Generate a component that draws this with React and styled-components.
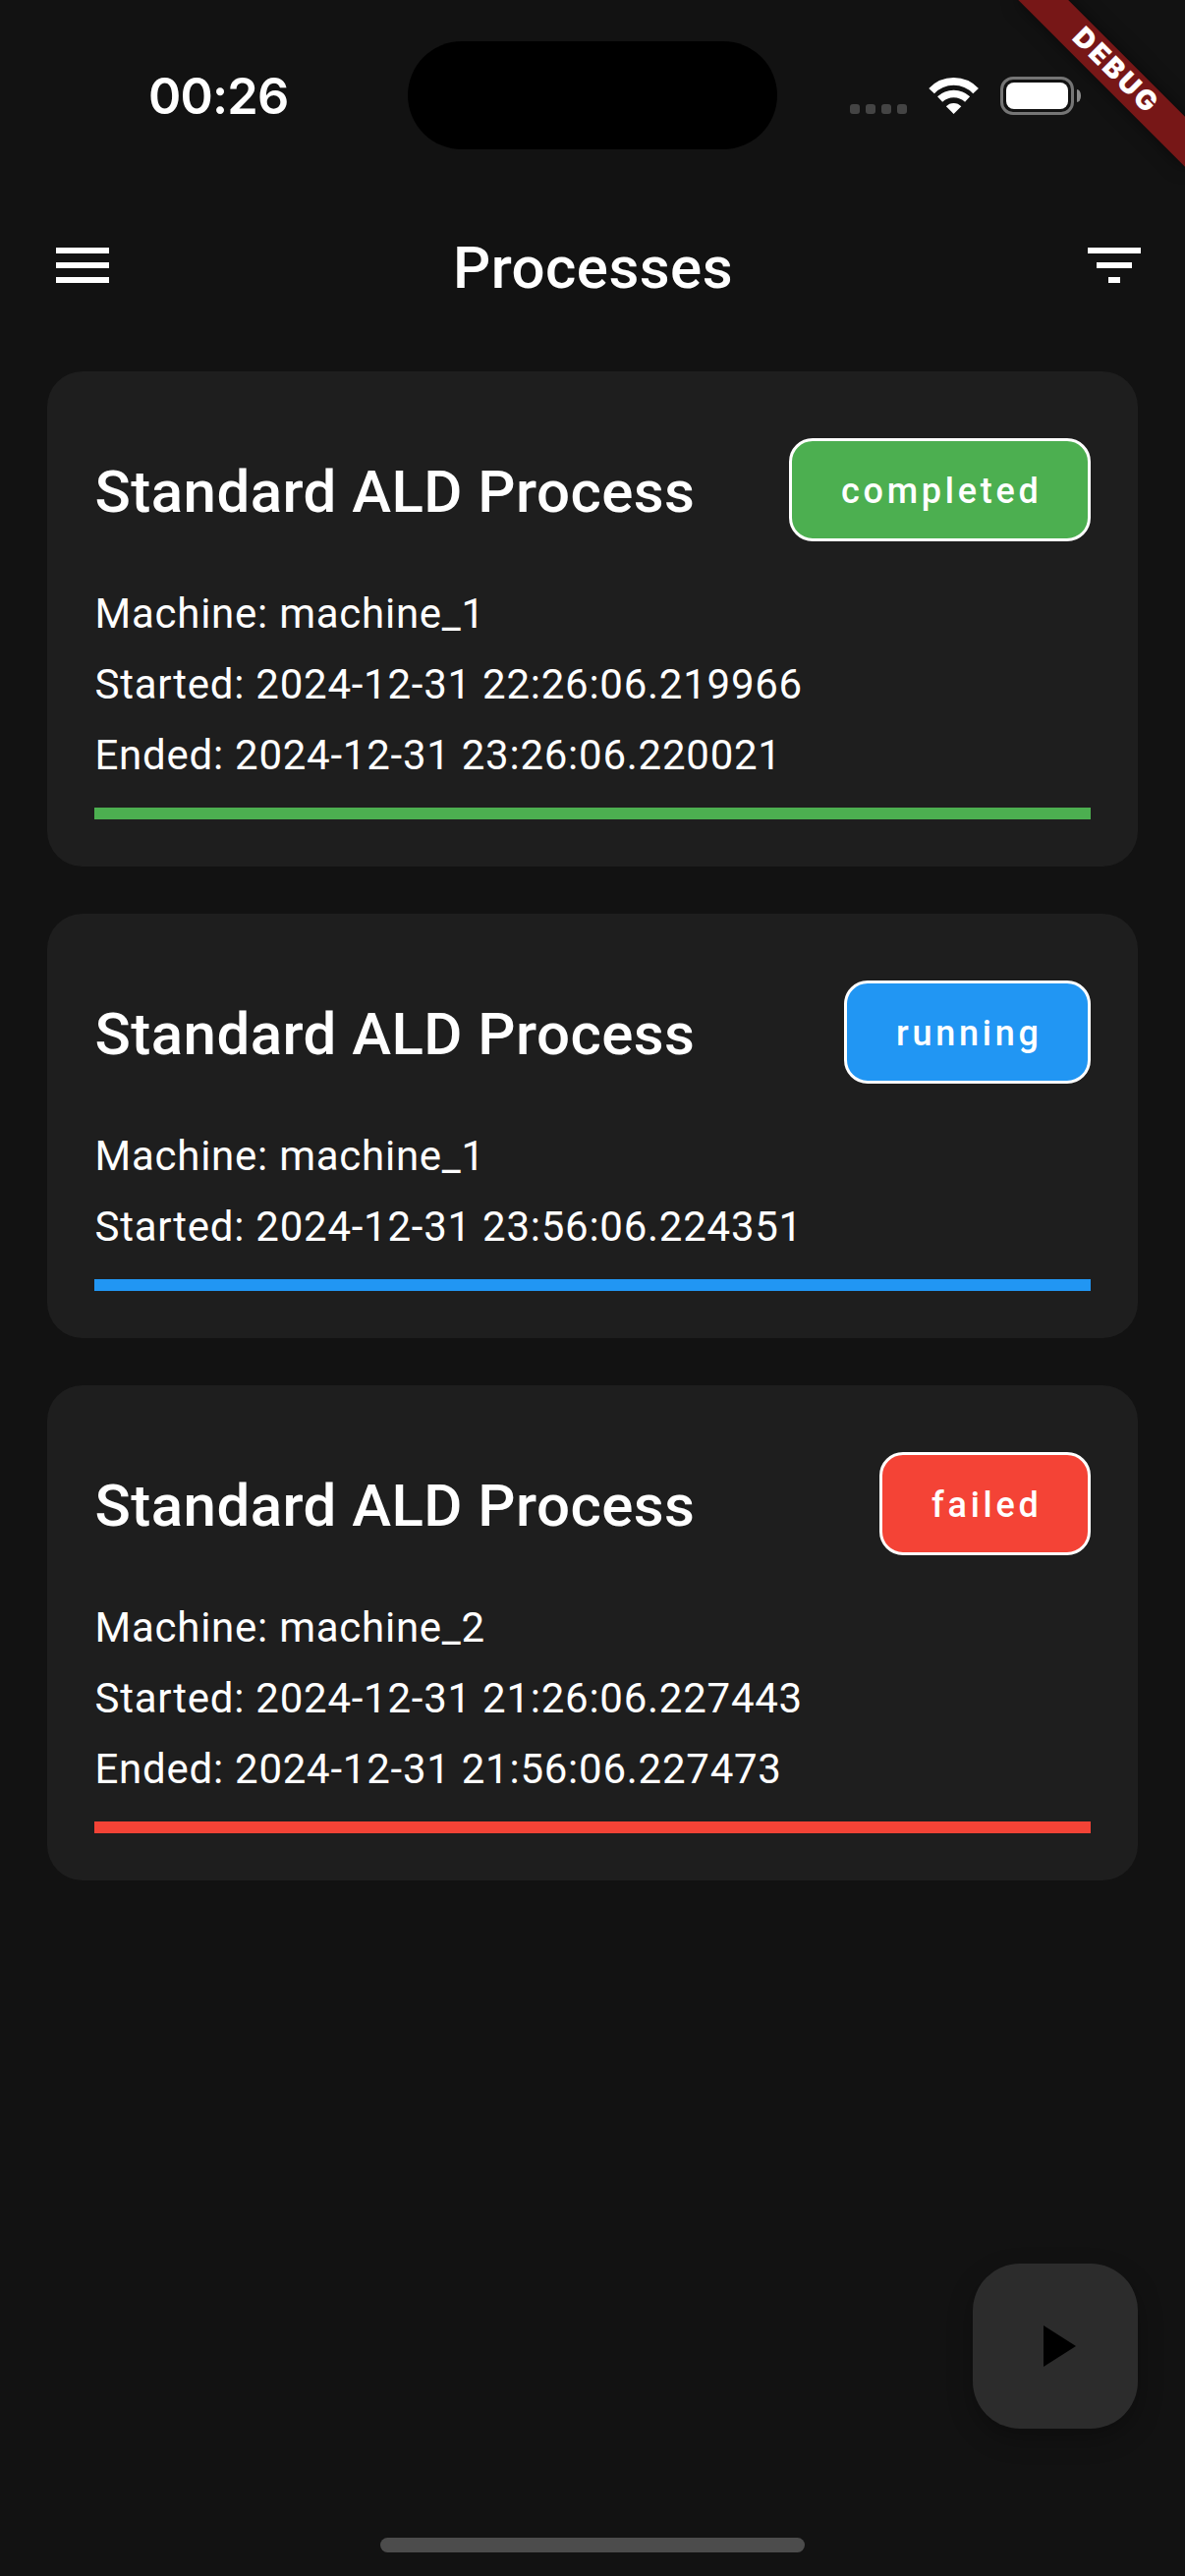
import React from "react";
import styled, { createGlobalStyle } from "styled-components";

const GlobalStyle = createGlobalStyle`
  * { box-sizing: border-box; }
  html, body { margin: 0; padding: 0; background: #121212; }
  body { font-family: Roboto, "Liberation Sans", sans-serif; color: #fff; }
`;

const Screen = styled.div`
  position: relative;
  display: flex;
  flex-direction: column;
  width: 1206px;
  height: 2622px;
  overflow: hidden;
  background: #121212;
`;

const StatusBar = styled.header`
  display: grid;
  grid-template-columns: 415px 376px 415px;
  align-items: start;
  height: 186px;
  flex: none;
`;

const Clock = styled.time`
  padding: 67px 0 0 151px;
  font-family: Inter, "Liberation Sans", sans-serif;
  font-size: 50.5px;
  font-weight: 600;
  line-height: 62px;
  letter-spacing: -0.8px;
`;

const Island = styled.div`
  height: 110px;
  margin-top: 42px;
  border-radius: 55px;
  background: #000;
`;

const Indicators = styled.div`
  display: flex;
  align-items: flex-end;
  height: 117px;
  padding-left: 74px;
`;

const SignalDots = styled.div`
  display: flex;
  gap: 6px;
  margin: 0 22px 1px 0;
`;

const SignalDot = styled.i`
  width: 10px;
  height: 10px;
  border-radius: 3px;
  background: #444;
`;

const WifiGlyph = styled.svg`
  width: 52px;
  height: 39px;
  margin-right: 21px;
`;

const Battery = styled.div`
  width: 75px;
  height: 39px;
  padding: 3px;
  border: 3px solid #757575;
  border-radius: 13px;
`;

const BatteryLevel = styled.div`
  height: 100%;
  border-radius: 8px;
  background: #fff;
`;

const BatteryCap = styled.div`
  width: 4px;
  height: 13px;
  margin: 0 0 13px 3px;
  border-radius: 0 4px 4px 0 / 0 6px 6px 0;
  background: #8a8a8a;
`;

const AppBar = styled.nav`
  display: flex;
  align-items: center;
  justify-content: space-between;
  height: 168px;
  flex: none;
  padding: 0 36px 0 48px;
`;

const IconButton = styled.button`
  display: flex;
  padding: 0;
  border: 0;
  background: none;
  color: #fff;
`;

const MaterialIcon = styled.svg`
  width: 72px;
  height: 72px;
  fill: currentColor;
`;

const PageTitle = styled.h1`
  margin: 0 0 0 -11px;
  font-size: 60px;
  font-weight: 500;
  line-height: 84px;
  letter-spacing: 0.45px;
  padding-top: 5px;
`;

const ProcessList = styled.main`
  display: flex;
  flex-direction: column;
  gap: 48px;
  padding: 24px 48px;
`;

const Card = styled.article`
  display: flex;
  flex-direction: column;
  padding: 48px;
  border-radius: 36px;
  background: #1e1e1e;
`;

const CardHeader = styled.div`
  display: flex;
  align-items: center;
  justify-content: space-between;
  height: 144px;
  margin-bottom: 24px;
`;

const CardTitle = styled.h2`
  margin: 0;
  font-size: 60px;
  font-weight: 500;
  line-height: 84px;
  letter-spacing: 0.45px;
  padding: 5px 0 0 0.6px;
`;

const StatusChip = styled.span`
  display: flex;
  align-items: center;
  height: 105px;
  padding: 4px 46.4px 0 49.6px;
  border: 3px solid #fff;
  border-radius: 24px;
  background: ${(p) => p.$color};
  font-size: 36px;
  font-weight: 500;
  letter-spacing: 3.75px;
`;

const Details = styled.div`
  display: flex;
  flex-direction: column;
  gap: 12px;
  padding: 0.5px 0 0 0.5px;
  margin-bottom: 23.5px;
`;

const Detail = styled.p`
  margin: 0;
  font-size: 42px;
  line-height: 60px;
  letter-spacing: 0.75px;
`;

const Progress = styled.div`
  height: 12px;
  background: ${(p) => p.$color};
`;

const Fab = styled.button`
  position: absolute;
  right: 48px;
  bottom: 150px;
  display: flex;
  align-items: center;
  justify-content: center;
  width: 168px;
  height: 168px;
  padding: 0;
  border: 0;
  border-radius: 48px;
  background: #2c2c2c;
  color: #000;
  box-shadow: 0 10px 26px rgba(0, 0, 0, 0.28);
`;

const HomeIndicator = styled.div`
  width: 432px;
  height: 15px;
  margin: auto auto 24px;
  border-radius: 8px;
  background: #4c4c4c;
`;

const DebugBanner = styled.div`
  position: absolute;
  top: 84px;
  right: -120px;
  width: 240px;
  height: 36px;
  padding-left: 2.7px;
  transform: rotate(45deg);
  transform-origin: 120px -84px;
  background: #771717;
  box-shadow: 0 0 18px rgba(0, 0, 0, 0.5);
  font-family: Inter, "Liberation Sans", sans-serif;
  font-size: 28px;
  font-weight: 900;
  line-height: 32px;
  letter-spacing: 2.7px;
  text-align: center;
`;

const processes = [
  {
    status: "completed",
    color: "#4caf50",
    details: [
      "Machine: machine_1",
      "Started: 2024-12-31 22:26:06.219966",
      "Ended: 2024-12-31 23:26:06.220021",
    ],
  },
  {
    status: "running",
    color: "#2196f3",
    details: ["Machine: machine_1", "Started: 2024-12-31 23:56:06.224351"],
  },
  {
    status: "failed",
    color: "#f44336",
    details: [
      "Machine: machine_2",
      "Started: 2024-12-31 21:26:06.227443",
      "Ended: 2024-12-31 21:56:06.227473",
    ],
  },
];

export default function App() {
  return (
    <Screen>
      <GlobalStyle />
      <StatusBar>
        <Clock>00:26</Clock>
        <Island />
        <Indicators>
          <SignalDots>
            <SignalDot />
            <SignalDot />
            <SignalDot />
            <SignalDot />
          </SignalDots>
          <WifiGlyph viewBox="0 0 52 39">
            <g fill="none" stroke="#fff">
              <path d="M3.1 14.6A30.8 30.8 0 0 1 48.1 14.6" strokeWidth="7.7" />
              <path d="M11.6 23A20.4 20.4 0 0 1 39.6 23" strokeWidth="7.4" />
            </g>
            <path d="M25.6 38L17.9 30.3A10.4 10.4 0 0 1 33.3 30.3Z" fill="#fff" />
          </WifiGlyph>
          <Battery>
            <BatteryLevel />
          </Battery>
          <BatteryCap />
        </Indicators>
      </StatusBar>

      <AppBar>
        <IconButton aria-label="Menu">
          <MaterialIcon viewBox="0 0 24 24">
            <path d="M3 18h18v-2H3v2zm0-5h18v-2H3v2zm0-7v2h18V6H3z" />
          </MaterialIcon>
        </IconButton>
        <PageTitle>Processes</PageTitle>
        <IconButton aria-label="Filter">
          <MaterialIcon viewBox="0 0 24 24">
            <path d="M10 18h4v-2h-4v2zM3 6v2h18V6H3zm3 7h12v-2H6v2z" />
          </MaterialIcon>
        </IconButton>
      </AppBar>

      <ProcessList>
        {processes.map((process) => (
          <Card key={process.status}>
            <CardHeader>
              <CardTitle>Standard ALD Process</CardTitle>
              <StatusChip $color={process.color}>{process.status}</StatusChip>
            </CardHeader>
            <Details>
              {process.details.map((line) => (
                <Detail key={line}>{line}</Detail>
              ))}
            </Details>
            <Progress $color={process.color} />
          </Card>
        ))}
      </ProcessList>

      <HomeIndicator />

      <Fab aria-label="Start process">
        <MaterialIcon viewBox="0 0 24 24">
          <path d="M8 5v14l11-7z" />
        </MaterialIcon>
      </Fab>
      <DebugBanner>DEBUG</DebugBanner>
    </Screen>
  );
}
